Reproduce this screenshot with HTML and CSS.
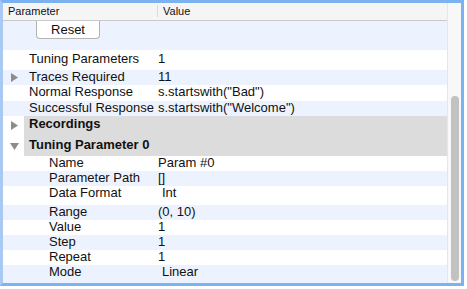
FILE: index.html
```html
<!DOCTYPE html>
<html lang="en">
<head>
  <meta charset="UTF-8">
  <title>Parameters</title>
  <link rel="stylesheet" href="styles.css">
</head>
<body>
  <div class="panel">
    <div class="table">
      <div class="head">
        <div class="head-name">Parameter</div>
        <div class="head-value">Value</div>
      </div>

      <div class="rows">
        <div class="row alt h-button">
          <button class="reset">Reset</button>
        </div>
        <div class="row h-20 pad-2">
          <div class="name">Tuning Parameters</div>
          <div class="value">1</div>
        </div>
        <div class="row alt">
          <svg class="arrow" width="7" height="9" viewBox="0 0 7 9"><polygon points="0,0 7,4.5 0,9" /></svg>
          <div class="name">Traces Required</div>
          <div class="value">11</div>
        </div>
        <div class="row h-16">
          <div class="name">Normal Response</div>
          <div class="value">s.startswith("Bad")</div>
        </div>
        <div class="row alt">
          <div class="name">Successful Response</div>
          <div class="value">s.startswith("Welcome")</div>
        </div>

        <div class="row section pad-1">
          <svg class="arrow" width="7" height="9" viewBox="0 0 7 9"><polygon points="0,0 7,4.5 0,9" /></svg>
          <div class="name bold">Recordings</div>
        </div>
        <div class="row section pad-2">
          <svg class="arrow down" width="9" height="7" viewBox="0 0 9 7"><polygon points="0,0 9,0 4.5,7" /></svg>
          <div class="name bold">Tuning Parameter 0</div>
        </div>

        <div class="row sub">
          <div class="name">Name</div>
          <div class="value">Param #0</div>
        </div>
        <div class="row sub alt">
          <div class="name">Parameter Path</div>
          <div class="value">[]</div>
        </div>
        <div class="row sub h-19">
          <div class="name">Data Format</div>
          <div class="value popup">Int</div>
        </div>
        <div class="row sub alt">
          <div class="name">Range</div>
          <div class="value">(0, 10)</div>
        </div>
        <div class="row sub">
          <div class="name">Value</div>
          <div class="value">1</div>
        </div>
        <div class="row sub alt">
          <div class="name">Step</div>
          <div class="value">1</div>
        </div>
        <div class="row sub">
          <div class="name">Repeat</div>
          <div class="value">1</div>
        </div>
        <div class="row sub alt h-19">
          <div class="name">Mode</div>
          <div class="value popup">Linear</div>
        </div>
      </div>
    </div>

    <div class="scrollbar">
      <div class="thumb"></div>
    </div>
  </div>
</body>
</html>
```

FILE: styles.css
```css
body {
  margin: 0;
  padding: 0;
  background-color: #fff;
  font-family: "Liberation Sans", Arial, sans-serif;
  color: #111;
}

.panel {
  display: flex;
  width: 464px;
  height: 286px;
  box-sizing: border-box;
  border: 3px solid #7cb2f0;
  border-left-color: #a9c9f2;
  background-color: #fff;
}

.table {
  flex: 1;
  overflow: hidden;
}

.head {
  display: flex;
  height: 17px;
  border-bottom: 1px solid #c9c9c9;
  background-color: #f5f5f5;
  font-size: 11px;
  line-height: 17px;
}

.head-name {
  width: 150px;
  padding-left: 5px;
  position: relative;
}

.head-name::after {
  content: "";
  position: absolute;
  right: 0;
  top: 2px;
  bottom: 3px;
  border-right: 1px solid #dadada;
}

.head-value {
  padding-left: 5px;
}

.row {
  display: flex;
  align-items: flex-start;
  height: 15px;
  position: relative;
  font-size: 13px;
  line-height: 14px;
}

.alt {
  background-color: #edf3fe;
}

.h-button {
  height: 29px;
}

.h-20 {
  height: 20px;
}

.h-16 {
  height: 16px;
}

.h-19 {
  height: 19px;
}

.pad-1 {
  padding-top: 1px;
  box-sizing: border-box;
}

.pad-2 {
  padding-top: 2px;
  box-sizing: border-box;
}

.name {
  width: 129px;
  padding-left: 26px;
  white-space: nowrap;
}

.sub .name {
  width: 109px;
  padding-left: 46px;
}

.value {
  white-space: nowrap;
}

.popup {
  padding-left: 4px;
}

.bold {
  font-weight: bold;
}

.section {
  height: 20px;
  margin-left: 21px;
  background-color: #dcdcdc;
}

.section .name {
  padding-left: 5px;
}

.arrow {
  position: absolute;
  left: 8px;
  top: 3px;
  fill: #8c8c8c;
}

.section .arrow {
  left: -13px;
  top: 5px;
}

.section .arrow.down {
  left: -14px;
  top: 7px;
}

.reset {
  margin-left: 33px;
  width: 64px;
  height: 18px;
  padding: 0;
  border: 1px solid #b4b4b4;
  border-top: none;
  border-radius: 0 0 4px 4px;
  background-color: #fff;
  font-family: "Liberation Sans", Arial, sans-serif;
  font-size: 13px;
  line-height: 12px;
  color: #111;
}

.scrollbar {
  width: 13px;
  border-left: 1px solid #e6e6e6;
  background-color: #f8f8f8;
}

.thumb {
  width: 8px;
  height: 185px;
  margin-top: 93px;
  margin-left: 3px;
  border-radius: 4px;
  background-color: #c2c2c2;
}
```
